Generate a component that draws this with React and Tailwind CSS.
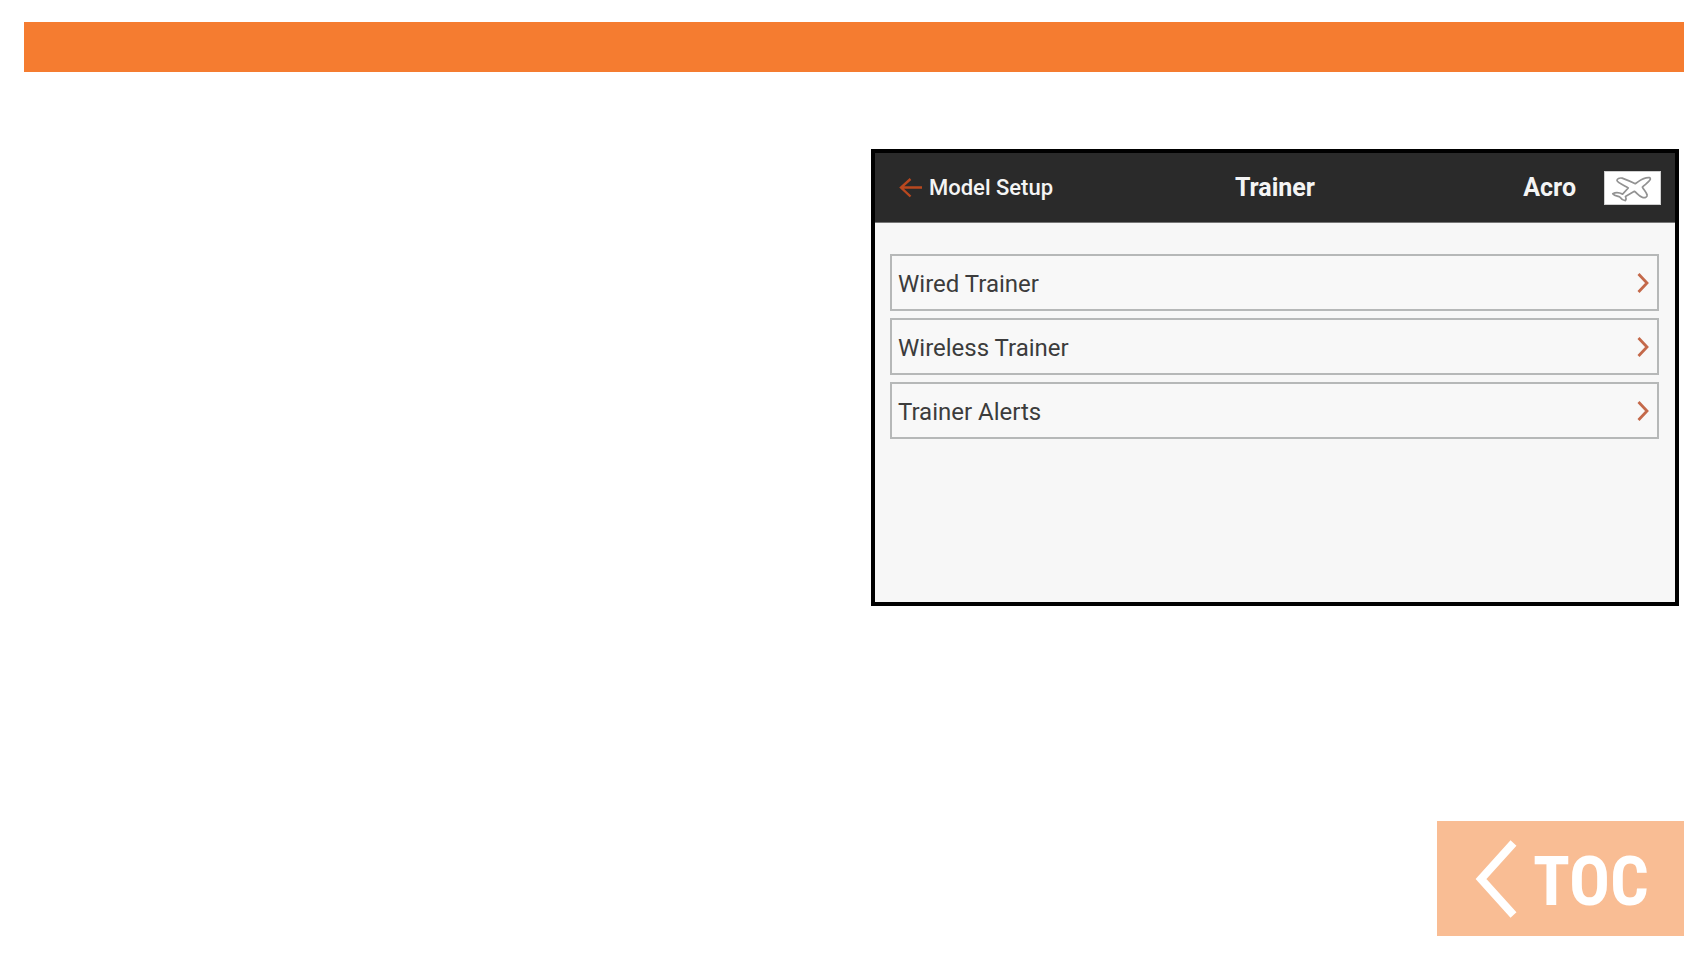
const MENU_ITEMS = [
  { id: 'wired', label: 'Wired Trainer' },
  { id: 'wireless', label: 'Wireless Trainer' },
  { id: 'alerts', label: 'Trainer Alerts' },
]

function BackArrow() {
  return (
    <svg viewBox="0 0 24 20" className="h-5 w-6" fill="none" stroke="#b9481f" strokeWidth="2.4" aria-hidden="true">
      <path d="M23 9.500H2M11.500 1L2 9.500l9.500 9" />
    </svg>
  )
}

function Chevron() {
  return (
    <svg viewBox="0 0 12 20" className="h-5 w-3" fill="none" stroke="#c4694a" strokeWidth="2.8" aria-hidden="true">
      <path d="M1.500 1L10 10l-8.500 9" />
    </svg>
  )
}

function PlaneIcon() {
  return (
    <svg
      viewBox="0 0 57 34"
      className="h-[34px] w-[57px] border border-[#cfcfcf] bg-white"
      fill="none"
      stroke="#929292"
      strokeWidth="1.8"
      strokeLinejoin="round"
      strokeLinecap="round"
      role="img"
      aria-label="Airplane"
    >
      <path d="M46.500 6c-4-.5-8 1.500-11.500 4L31.500 12.500c-4-2-10-4.500-14-6-3-.5-5.500.5-5.500 2.500 0 2 8 5.500 12 8l-6 6.500c-3-1.500-7.500-2-10.500-.5 1.500 2 4.500 2.500 7.500 3.500 1 1.500 3.500 3.500 6 4 .8-1.500.8-3 0-4.500l9.500-5.500c3 2 5 5.500 8.500 6.500 3 .8 5.500-.5 5-2.500-.5-3-3.500-5.500-5-8.500 3-3 7.500-5.500 8.500-8.500 0-.8-.3-1.300-1-1.500z" />
    </svg>
  )
}

function DevicePanel() {
  return (
    <section className="flex min-h-[457px] flex-col border-4 border-black bg-[#f7f7f7]">
      <header className="grid h-[70px] grid-cols-[1fr_auto_1fr] items-center border-b border-[#777777] bg-[#2a2a2a] px-[14px] text-[#f4f4f4]">
        <button type="button" className="flex items-center gap-1.5 justify-self-start pl-2.5 text-[22px] font-medium">
          <BackArrow />
          Model Setup
        </button>
        <h1 className="text-[25px] leading-8 font-bold">Trainer</h1>
        <div className="flex items-center gap-7 justify-self-end text-[25px] leading-8 font-bold">
          <span>Acro</span>
          <PlaneIcon />
        </div>
      </header>
      <nav className="flex flex-col gap-[7px] pt-[31px] pr-4 pl-[15px]">
        {MENU_ITEMS.map((item) => (
          <button
            key={item.id}
            type="button"
            className="flex h-[57px] items-center justify-between border-2 border-[#b6b8b8] bg-[#f8f8f8] pr-2 pl-1.5 text-2xl text-[#3c3c3c]"
          >
            <span className="pt-0.5">{item.label}</span>
            <Chevron />
          </button>
        ))}
      </nav>
    </section>
  )
}

export default function App() {
  return (
    <div className="flex min-h-screen flex-col bg-white px-6 pt-[22px] pb-6 font-[Roboto,sans-serif]">
      <div className="h-[50px] bg-[#f57c30]" />
      <main className="ml-auto w-1/2 pt-[77px] pr-[5px] pl-[17px]">
        <DevicePanel />
      </main>
      <a
        href="#contents"
        className="mt-auto flex h-[115px] w-[247px] items-center gap-4 self-end bg-[#f9bd94] pl-[38px] text-white"
      >
        <svg viewBox="0 0 42 78" className="h-[78px] w-[42px]" fill="none" stroke="currentColor" strokeWidth="8" aria-hidden="true">
          <path d="M38.500 3L6 39l32.500 36" />
        </svg>
        <span className="pt-1.5 font-['Roboto_Condensed',Roboto,sans-serif] text-[68px] leading-none font-bold">TOC</span>
      </a>
    </div>
  )
}
